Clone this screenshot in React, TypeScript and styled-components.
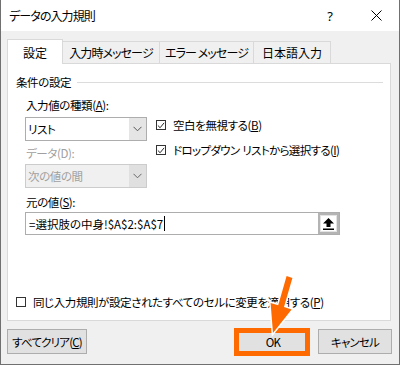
import React from 'react';
import styled, { createGlobalStyle } from 'styled-components';

const Global = createGlobalStyle`
  html, body { margin: 0; padding: 0; background: #f0f0f0; }
  body {
    font-family: "Noto Sans CJK JP", "Noto Sans", sans-serif;
    font-size: 11.5px;
    letter-spacing: -0.4px;
    color: #000;
    font-feature-settings: "palt";
  }
  * { box-sizing: border-box; }
`;

const Window = styled.div`
  position: relative;
  width: 400px;
  height: 365px;
  background: #f0f0f0;
  border: 1px solid #707070;
  border-top: none;
  display: flex;
  flex-direction: column;
  overflow: hidden;
`;

const TitleBar = styled.div`
  height: 31px;
  background: #fff;
  display: flex;
  align-items: center;
  padding-left: 8px;
`;

const Title = styled.div`
  flex: 1;
  line-height: 16px;
  font-size: 12px;
  letter-spacing: -0.9px;
`;

const TitleButton = styled.div`
  width: 46px;
  height: 31px;
  display: flex;
  align-items: center;
  justify-content: center;
  font-family: "Noto Sans", sans-serif;
  font-size: 13px;
  letter-spacing: 0;
`;

const TabStrip = styled.div`
  position: relative;
  z-index: 1;
  display: flex;
  align-items: flex-end;
  height: 24px;
  margin: 8px 0 0 6px;
`;

const Tab = styled.div<{ $active?: boolean; $w: number; $first?: boolean }>`
  width: ${(p) => p.$w}px;
  height: ${(p) => (p.$active ? 25 : 22)}px;
  margin-bottom: ${(p) => (p.$active ? -1 : 0)}px;
  margin-left: ${(p) => (p.$first ? 0 : -1)}px;
  background: ${(p) => (p.$active ? '#fff' : '#f0f0f0')};
  border: 1px solid #d9d9d9;
  border-bottom: none;
  display: flex;
  align-items: center;
  justify-content: center;
  font-size: 12px;
  letter-spacing: -0.9px;
  white-space: nowrap;
`;

const TabKanji = styled.span`
  letter-spacing: 0;
`;

const Panel = styled.div`
  margin: 0 8px 0 6px;
  height: 258px;
  background: #fff;
  border: 1px solid #d9d9d9;
  display: flex;
  flex-direction: column;
  padding: 10px 7px 10px 8px;
`;

const GroupHeader = styled.div`
  height: 16px;
  display: flex;
  align-items: center;
`;

const GroupLine = styled.div`
  flex: 1;
  height: 1px;
  background: #dcdcdc;
  margin-left: 6px;
`;

const GroupBody = styled.div`
  padding-left: 9px;
  margin-top: 7px;
  display: flex;
  flex-direction: column;
`;

const Row = styled.div`
  display: flex;
`;

const LeftCol = styled.div`
  width: 122px;
  display: flex;
  flex-direction: column;
`;

const RightCol = styled.div`
  margin-left: 9px;
  padding-top: 20px;
  display: flex;
  flex-direction: column;
  gap: 9px;
`;

const FieldLabel = styled.div<{ $disabled?: boolean; $mt?: number }>`
  height: 16px;
  line-height: 16px;
  padding-left: 1px;
  margin-top: ${(p) => p.$mt ?? 0}px;
  color: ${(p) => (p.$disabled ? '#a0a0a0' : '#000')};
  white-space: nowrap;
`;

const Select = styled.div<{ $disabled?: boolean; $mt: number }>`
  margin-top: ${(p) => p.$mt}px;
  height: 24px;
  border: 1px solid ${(p) => (p.$disabled ? '#cccccc' : '#adadad')};
  background: ${(p) => (p.$disabled ? '#f0f0f0' : '#fff')};
  color: ${(p) => (p.$disabled ? '#a0a0a0' : '#000')};
  display: flex;
  align-items: stretch;
`;

const SelectValue = styled.div`
  flex: 1;
  display: flex;
  align-items: center;
  padding-left: 2px;
`;

const SelectButton = styled.div<{ $disabled?: boolean }>`
  width: 17px;
  background: ${(p) => (p.$disabled ? '#e0e0e0' : '#e5e5e5')};
  display: flex;
  align-items: center;
  justify-content: center;
`;

const CheckRow = styled.label`
  height: 16px;
  display: flex;
  align-items: center;
  gap: 7px;
  white-space: nowrap;
`;

const KanaText = styled.span`
  letter-spacing: -0.65px;
  word-spacing: 1px;
`;

const Box = styled.span`
  width: 10px;
  height: 10px;
  flex: none;
  border: 1px solid #333;
  background: #fff;
  display: flex;
  align-items: center;
  justify-content: center;
`;

const InputBox = styled.div`
  margin-top: 2px;
  width: 315px;
  height: 23px;
  border: 1px solid #adadad;
  background: #fff;
  display: flex;
  align-items: stretch;
`;

const InputText = styled.div`
  flex: 1;
  display: flex;
  align-items: center;
  padding-left: 3px;
  letter-spacing: 0;
  white-space: nowrap;
`;

const Caret = styled.span`
  display: inline-block;
  width: 1px;
  height: 15px;
  background: #000;
  margin-left: 1px;
`;

const RefButton = styled.div`
  width: 21px;
  border: 2px solid #b4b4b4;
  background: #fff;
  box-shadow: inset 0 0 0 1px #e3e3e3;
  display: flex;
  align-items: center;
  justify-content: center;
`;

const BottomRow = styled(CheckRow)`
  margin-top: auto;
`;

const Footer = styled.div`
  display: flex;
  padding: 8px 7px 0 6px;
`;

const Button = styled.div<{ $w: number; $ml?: string }>`
  position: relative;
  width: ${(p) => p.$w}px;
  height: 25px;
  margin-left: ${(p) => p.$ml ?? '0'};
  background: #e1e1e1;
  border: 1px solid #adadad;
  display: flex;
  align-items: center;
  justify-content: center;
  letter-spacing: -0.8px;
  white-space: nowrap;
`;

const HighlightFrame = styled.span`
  position: absolute;
  top: -2px;
  left: -5px;
  right: -3px;
  bottom: -3px;
  border: 5px solid #ff6a00;
  pointer-events: none;
`;

const ArrowOverlay = styled.svg`
  position: absolute;
  left: 265px;
  top: 272px;
  overflow: visible;
  pointer-events: none;
`;

const Check = () => (
  <svg width="9" height="9" viewBox="0 0 9 9">
    <polyline points="1,4.5 3.5,7 8,1.5" fill="none" stroke="#222" strokeWidth="1.1" />
  </svg>
);

const Chevron = ({ color }: { color: string }) => (
  <svg width="9" height="6" viewBox="0 0 9 6">
    <polyline points="0.5,0.8 4.5,4.8 8.5,0.8" fill="none" stroke={color} strokeWidth="1" />
  </svg>
);

export default function App() {
  return (
    <>
      <Global />
      <Window>
        <TitleBar>
          <Title>データの入力規則</Title>
          <TitleButton>?</TitleButton>
          <TitleButton>
            <svg width="11" height="11" viewBox="0 0 11 11">
              <path d="M0.5 0.5 L10.5 10.5 M10.5 0.5 L0.5 10.5" stroke="#000" strokeWidth="1" />
            </svg>
          </TitleButton>
        </TitleBar>

        <TabStrip>
          <Tab $active $first $w={56}><TabKanji>設定</TabKanji></Tab>
          <Tab $w={98}>入力時メッセージ</Tab>
          <Tab $w={95}>エラー メッセージ</Tab>
          <Tab $w={78}><TabKanji>日本語入力</TabKanji></Tab>
        </TabStrip>

        <Panel>
          <GroupHeader>
            <span>条件の設定</span>
            <GroupLine />
          </GroupHeader>
          <GroupBody>
            <Row>
              <LeftCol>
                <FieldLabel>入力値の種類(<u>A</u>):</FieldLabel>
                <Select $mt={4}>
                  <SelectValue>リスト</SelectValue>
                  <SelectButton>
                    <Chevron color="#555" />
                  </SelectButton>
                </Select>
                <FieldLabel $disabled $mt={4}>データ(D):</FieldLabel>
                <Select $disabled $mt={3}>
                  <SelectValue>次の値の間</SelectValue>
                  <SelectButton $disabled>
                    <Chevron color="#666" />
                  </SelectButton>
                </Select>
              </LeftCol>
              <RightCol>
                <CheckRow>
                  <Box><Check /></Box>
                  <span>空白を無視する(<u>B</u>)</span>
                </CheckRow>
                <CheckRow>
                  <Box><Check /></Box>
                  <KanaText>ドロップダウン リストから選択する(<u>I</u>)</KanaText>
                </CheckRow>
              </RightCol>
            </Row>
            <FieldLabel $mt={6}>元の値(<u>S</u>):</FieldLabel>
            <InputBox>
              <InputText>
                =選択肢の中身!$A$2:$A$7<Caret />
              </InputText>
              <RefButton>
                <svg width="11" height="12" viewBox="0 0 11 12">
                  <polygon points="5.5,0 11,5.5 7.5,5.5 7.5,9 3.5,9 3.5,5.5 0,5.5" fill="#000" />
                  <rect x="0" y="10.5" width="11" height="1.5" fill="#000" />
                </svg>
              </RefButton>
            </InputBox>
          </GroupBody>
          <BottomRow>
            <Box />
            <span>同じ入力規則が設定されたすべてのセルに変更を適用する(<u>P</u>)</span>
          </BottomRow>
        </Panel>

        <Footer>
          <Button $w={80}>すべてクリア(<u>C</u>)</Button>
          <Button $w={70} $ml="auto">
            OK
            <HighlightFrame />
          </Button>
          <Button $w={74} $ml="10px">キャンセル</Button>
        </Footer>

        <ArrowOverlay width="30" height="66" viewBox="0 0 30 66">
          <polygon
            points="20.6,4.1 26.4,5.9 18,35.1 25.6,37.4 7,61 4.6,31 12.2,33.3"
            fill="#ff6a00"
            stroke="#fff"
            strokeWidth="3"
            strokeLinejoin="miter"
            style={{ paintOrder: 'stroke' }}
          />
        </ArrowOverlay>
      </Window>
    </>
  );
}
